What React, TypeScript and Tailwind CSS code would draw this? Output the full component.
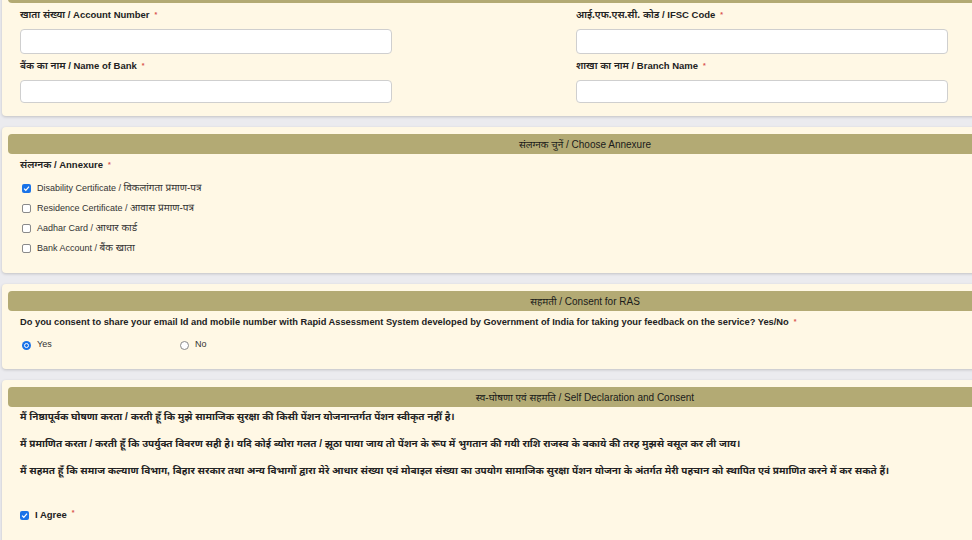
import React from "react";

const font = { fontFamily: '"Liberation Sans", Arial, "Noto Sans Devanagari", "Noto Sans", sans-serif' };

function Req() {
  return <span className="ml-[5px] text-[7px] text-[#d9534f] align-top">*</span>;
}

function Bar({ title }: { title?: string }) {
  return (
    <div className="h-[20px] rounded-[4px] bg-[#b3aa74] flex items-center justify-center text-[10px] text-[#1a1a1a]">
      {title}
    </div>
  );
}

function Card({ children, className = "" }: { children: React.ReactNode; className?: string }) {
  return (
    <div className={"mx-[2px] rounded-[4px] bg-[#fff8e5] shadow-[0_1px_3px_rgba(0,0,0,0.18)] px-[6px] pt-[7px] " + className}>
      {children}
    </div>
  );
}

function Check({ checked }: { checked?: boolean }) {
  return checked ? (
    <span className="w-[9px] h-[9px] rounded-[2px] bg-[#1a73e8] flex items-center justify-center shrink-0">
      <svg width="7" height="7" viewBox="0 0 10 10">
        <path d="M1.5 5.2 L4 7.6 L8.6 2.4" stroke="white" strokeWidth="1.8" fill="none" />
      </svg>
    </span>
  ) : (
    <span className="w-[9px] h-[9px] rounded-[2px] border border-[#8a8a8a] bg-white shrink-0" />
  );
}

function Radio({ checked }: { checked?: boolean }) {
  return checked ? (
    <span className="w-[9px] h-[9px] rounded-full bg-[#1a73e8] flex items-center justify-center shrink-0">
      <span className="w-[5px] h-[5px] rounded-full bg-[#1a73e8] border border-white" />
    </span>
  ) : (
    <span className="w-[9px] h-[9px] rounded-full border border-[#8a8a8a] bg-white shrink-0" />
  );
}

function Field({ hi, en, h }: { hi: string; en: string; h: string }) {
  return (
    <div className="w-[372px]">
      <div className="h-[14px] leading-[14px] text-[9.5px] font-bold text-[#222]">
        <span className="text-[10px] font-semibold">{hi}</span> / {en}
        <Req />
      </div>
      <div className={"mt-[7px] rounded-[4px] border border-[#cfcfcf] bg-white " + h} />
    </div>
  );
}

export default function App() {
  const annexures = [
    { en: "Disability Certificate", hi: "विकलांगता प्रमाण-पत्र", checked: true },
    { en: "Residence Certificate", hi: "आवास प्रमाण-पत्र" },
    { en: "Aadhar Card", hi: "आधार कार्ड" },
    { en: "Bank Account", hi: "बैंक खाता" },
  ];

  return (
    <div className="w-[972px] h-[540px] overflow-hidden bg-[#ebebef]" style={font}>
      <div className="w-[1170px] mt-[-24px] flex flex-col gap-[11px]">
        <Card className="pb-[13px]">
          <Bar />
          <div className="px-[12px] flex gap-[184px]">
            <div className="flex flex-col">
              <div className="mt-[5px]"><Field hi="खाता संख्या" en="Account Number" h="h-[25px]" /></div>
              <div className="mt-[5px]"><Field hi="बैंक का नाम" en="Name of Bank" h="h-[23px]" /></div>
            </div>
            <div className="flex flex-col">
              <div className="mt-[5px]"><Field hi="आई.एफ.एस.सी. कोड" en="IFSC Code" h="h-[25px]" /></div>
              <div className="mt-[5px]"><Field hi="शाखा का नाम" en="Branch Name" h="h-[23px]" /></div>
            </div>
          </div>
        </Card>

        <Card className="pb-[15px]">
          <Bar title="संलग्नक चुनें / Choose Annexure" />
          <div className="px-[12px]">
            <div className="mt-[4px] h-[14px] leading-[14px] text-[9.5px] font-bold text-[#222]">
              <span className="text-[10px] font-semibold">संलग्नक</span> / Annexure
              <Req />
            </div>
            <div className="mt-[6px] flex flex-col">
              {annexures.map((a) => (
                <div key={a.en} className="h-[20px] flex items-center gap-[6px] pl-[2px] text-[9px] text-[#333]">
                  <Check checked={a.checked} />
                  <span>
                    {a.en} / <span className="text-[10px]">{a.hi}</span>
                  </span>
                </div>
              ))}
            </div>
          </div>
        </Card>

        <Card className="pb-[17px]">
          <Bar title="सहमती / Consent for RAS" />
          <div className="px-[12px]">
            <div className="mt-[4px] h-[14px] leading-[14px] text-[9.3px] font-bold text-[#222]">
              Do you consent to share your email Id and mobile number with Rapid Assessment System developed by Government of India for taking your feedback on the service? Yes/No
              <Req />
            </div>
            <div className="mt-[9px] h-[14px] flex items-center text-[9px] text-[#333]">
              <label className="w-[160px] flex items-center gap-[6px] pl-[2px]">
                <Radio checked />
                <span>Yes</span>
              </label>
              <label className="flex items-center gap-[6px]">
                <Radio />
                <span>No</span>
              </label>
            </div>
          </div>
        </Card>

        <Card className="pb-[30px]">
          <Bar title="स्व-घोषणा एवं सहमति / Self Declaration and Consent" />
          <div className="px-[12px] text-[10px] font-bold text-[#222]">
            <p className="mt-[3px] h-[14px] leading-[14px]">
              मैं निष्ठापूर्वक घोषणा करता / करती हूँ कि मुझे सामाजिक सुरक्षा की किसी पेंशन योजनान्तर्गत पेंशन स्वीकृत नहीं है।
            </p>
            <p className="mt-[13px] h-[14px] leading-[14px]">
              मैं प्रमाणित करता / करती हूँ कि उपर्युक्त विवरण सही है। यदि कोई ब्योरा गलत / झूठा पाया जाय तो पेंशन के रूप में भुगतान की गयी राशि राजस्व के बकाये की तरह मुझसे वसूल कर ली जाय।
            </p>
            <p className="mt-[13px] h-[14px] leading-[14px]">
              मैं सहमत हूँ कि समाज कल्याण विभाग, बिहार सरकार तथा अन्य विभागों द्वारा मेरे आधार संख्या एवं मोबाइल संख्या का उपयोग सामाजिक सुरक्षा पेंशन योजना के अंतर्गत मेरी पहचान को स्थापित एवं प्रमाणित करने में कर सकते हैं।
            </p>
            <div className="mt-[30px] h-[14px] flex items-center gap-[6px] text-[9.5px]">
              <Check checked />
              <span>
                I Agree
                <Req />
              </span>
            </div>
          </div>
        </Card>
      </div>
    </div>
  );
}
